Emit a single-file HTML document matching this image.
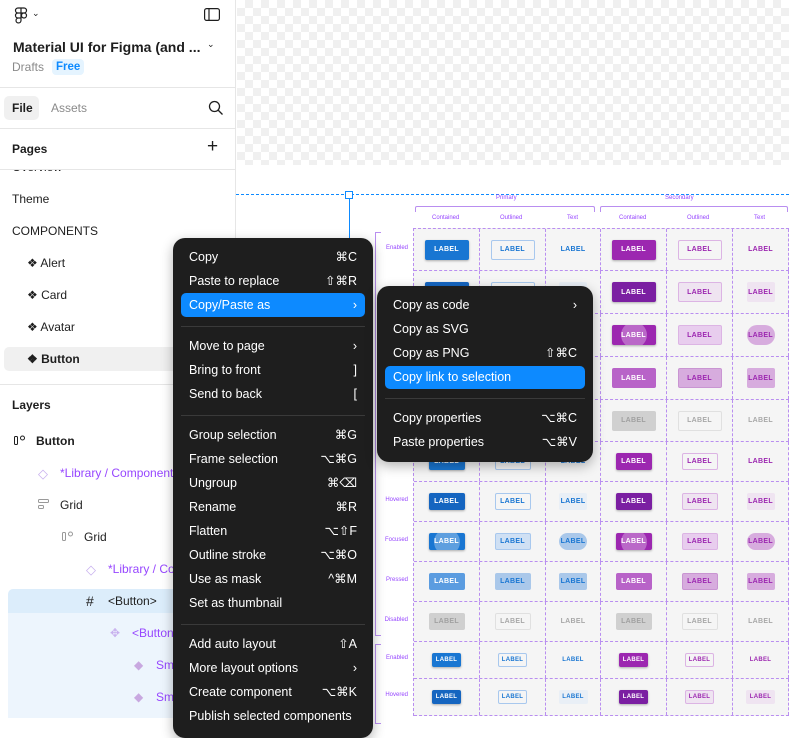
<!DOCTYPE html>
<html><head><meta charset="utf-8"><style>
*{box-sizing:border-box;margin:0;padding:0}
body{width:789px;height:718px;overflow:hidden;position:relative;background:#fff;font-family:"Liberation Sans",sans-serif;font-size:12px;color:#1e1e1e}
.a{position:absolute;white-space:nowrap}
.checker{position:absolute;left:237px;top:0;width:552px;height:165px;background-color:#fff;background-image:linear-gradient(45deg,#f0f0f0 25%,transparent 25%,transparent 75%,#f0f0f0 75%),linear-gradient(45deg,#f0f0f0 25%,transparent 25%,transparent 75%,#f0f0f0 75%);background-size:16px 16px;background-position:0 0,8px 8px}
.panel{position:absolute;left:0;top:0;width:236px;height:718px;background:#fff;border-right:1px solid #e6e6e6}
.hr{position:absolute;left:0;width:236px;height:1px;background:#e6e6e6}
.purple{color:#9747ff}
.grid{position:absolute;left:413px;top:228px;width:376px;background:#f5f5f5}
.row{display:flex;border-bottom:1px dashed #b98ef0}
.c{border-right:1px dashed #b98ef0;display:flex;align-items:center;justify-content:center;flex:none;position:relative}
.c:nth-child(1),.c:nth-child(2),.c:nth-child(4),.c:nth-child(5){width:66px}
.c:nth-child(3){width:55px}.c:nth-child(6){width:56px}
.b{font-size:7px;font-weight:bold;letter-spacing:.3px;display:flex;align-items:center;justify-content:center;border-radius:2px}
.L .b{width:44px;height:20px}.M .b{width:36px;height:17px}.S .b{width:29px;height:14px;font-size:6px}
.L .c:nth-child(3) .b,.L .c:nth-child(6) .b{width:28px}
.M .c:nth-child(3) .b,.M .c:nth-child(6) .b{width:28px}
.pc{background:#1976d2;color:#fff;box-shadow:0 1px 2px rgba(0,0,0,.3)}
.ph{background:#1565c0;color:#fff;box-shadow:0 1px 2px rgba(0,0,0,.3)}
.pp{background:#5b9ce0;color:#fff}
.po{border:1px solid #a8c8ee;color:#1976d2;background:#f5f5f5}
.pt{color:#1976d2}
.pth{color:#1976d2;background:#e9eff6}
.ptp{color:#1976d2;background:#aac8ea}
.sc{background:#9c27b0;color:#fff;box-shadow:0 1px 2px rgba(0,0,0,.3)}
.sh{background:#7b1fa2;color:#fff;box-shadow:0 1px 2px rgba(0,0,0,.3)}
.sp{background:#b863c8;color:#fff}
.so{border:1px solid #dcb4e4;color:#9c27b0;background:#f5f5f5}
.soh{border:1px solid #dcb4e4;color:#9c27b0;background:#efe4f1}
.sop{color:#9c27b0;background:#d7acde;border:1px solid #c995d2}
.st{color:#9c27b0}
.sth{color:#9c27b0;background:#efe4f1}
.stp{color:#9c27b0;background:#d7acde}
.dc{background:#d0d0d0;color:#a0a0a0}
.do{border:1px solid #e0e0e0;color:#a8a8a8}
.dt{color:#a8a8a8}
.fo{position:relative;overflow:hidden}
.fo::after{content:"";position:absolute;left:50%;top:50%;width:26px;height:26px;margin:-13px;border-radius:50%;background:rgba(255,255,255,.3)}
.rl{position:absolute;font-size:6px;color:#9747ff;width:40px;text-align:right;left:368px}
.menu{position:absolute;background:#1e1e1e;border-radius:12px;color:#fff;font-size:12.5px;box-shadow:0 4px 12px rgba(0,0,0,.3)}
.mi{position:absolute;left:16px;right:16px;height:24px;line-height:24px}
.mi .k{position:absolute;right:0;top:0}
.sep{position:absolute;left:8px;right:8px;height:1px;background:#3a3a3a}
.hl{position:absolute;background:#0d8aff;border-radius:5px}
</style></head><body>
<div class="checker"></div>
<div class="a" style="left:236px;top:194px;width:553px;height:0;border-top:1px dashed #0d8aff"></div>
<div class="a" style="left:349px;top:195px;width:1px;height:50px;background:#0d8aff"></div>
<div class="a" style="left:345px;top:191px;width:8px;height:8px;border:1px solid #0d8aff;background:#fff"></div>
<div class="a purple" style="left:496px;top:195px;font-size:6px">Primary</div>
<div class="a purple" style="left:665px;top:195px;font-size:6px">Secondary</div>
<div class="a" style="left:415px;top:206px;width:180px;height:6px;border:1px solid #b98ef0;border-bottom:none;border-radius:2px 2px 0 0"></div>
<div class="a" style="left:600px;top:206px;width:188px;height:6px;border:1px solid #b98ef0;border-bottom:none;border-radius:2px 2px 0 0"></div>
<div class="a purple" style="left:432px;top:215px;font-size:6px">Contained</div>
<div class="a purple" style="left:500px;top:215px;font-size:6px">Outlined</div>
<div class="a purple" style="left:567px;top:215px;font-size:6px">Text</div>
<div class="a purple" style="left:619px;top:215px;font-size:6px">Contained</div>
<div class="a purple" style="left:687px;top:215px;font-size:6px">Outlined</div>
<div class="a purple" style="left:754px;top:215px;font-size:6px">Text</div>
<div class="a" style="left:375px;top:232px;width:6px;height:404px;border:1px solid #b98ef0;border-right:none"></div>
<div class="a" style="left:375px;top:644px;width:6px;height:80px;border:1px solid #b98ef0;border-right:none"></div>
<div class="rl" style="top:245px">Enabled</div>
<div class="rl" style="top:497px">Hovered</div>
<div class="rl" style="top:537px">Focused</div>
<div class="rl" style="top:577px">Pressed</div>
<div class="rl" style="top:617px">Disabled</div>
<div class="rl" style="top:655px">Enabled</div>
<div class="rl" style="top:692px">Hovered</div>
<div class="grid" style="border-top:1px dashed #b98ef0;border-left:1px dashed #b98ef0">
<div class="row L" style="height:42px"><div class="c"><div class="b pc">LABEL</div></div><div class="c"><div class="b po">LABEL</div></div><div class="c"><div class="b pt">LABEL</div></div><div class="c"><div class="b sc">LABEL</div></div><div class="c"><div class="b so">LABEL</div></div><div class="c"><div class="b st">LABEL</div></div></div>
<div class="row L" style="height:43px"><div class="c"><div class="b ph">LABEL</div></div><div class="c"><div class="b po">LABEL</div></div><div class="c"><div class="b pth">LABEL</div></div><div class="c"><div class="b sh">LABEL</div></div><div class="c"><div class="b soh">LABEL</div></div><div class="c"><div class="b sth">LABEL</div></div></div>
<div class="row L" style="height:43px"><div class="c"><div class="b pc fo">LABEL</div></div><div class="c"><div class="b po">LABEL</div></div><div class="c"><div class="b ptp" style="border-radius:10px">LABEL</div></div><div class="c"><div class="b sc fo">LABEL</div></div><div class="c"><div class="b so" style="background:#e8cdee">LABEL</div></div><div class="c"><div class="b stp" style="border-radius:10px">LABEL</div></div></div>
<div class="row L" style="height:43px"><div class="c"><div class="b pp">LABEL</div></div><div class="c"><div class="b ptp">LABEL</div></div><div class="c"><div class="b ptp">LABEL</div></div><div class="c"><div class="b sp">LABEL</div></div><div class="c"><div class="b sop">LABEL</div></div><div class="c"><div class="b stp">LABEL</div></div></div>
<div class="row L" style="height:42px"><div class="c"><div class="b dc">LABEL</div></div><div class="c"><div class="b do">LABEL</div></div><div class="c"><div class="b dt">LABEL</div></div><div class="c"><div class="b dc">LABEL</div></div><div class="c"><div class="b do">LABEL</div></div><div class="c"><div class="b dt">LABEL</div></div></div>
<div class="row M" style="height:40px"><div class="c"><div class="b pc">LABEL</div></div><div class="c"><div class="b po">LABEL</div></div><div class="c"><div class="b pt">LABEL</div></div><div class="c"><div class="b sc">LABEL</div></div><div class="c"><div class="b so">LABEL</div></div><div class="c"><div class="b st">LABEL</div></div></div>
<div class="row M" style="height:40px"><div class="c"><div class="b ph">LABEL</div></div><div class="c"><div class="b po">LABEL</div></div><div class="c"><div class="b pth">LABEL</div></div><div class="c"><div class="b sh">LABEL</div></div><div class="c"><div class="b soh">LABEL</div></div><div class="c"><div class="b sth">LABEL</div></div></div>
<div class="row M" style="height:40px"><div class="c"><div class="b pc fo">LABEL</div></div><div class="c"><div class="b po" style="background:#cfe0f4">LABEL</div></div><div class="c"><div class="b ptp" style="border-radius:9px">LABEL</div></div><div class="c"><div class="b sc fo">LABEL</div></div><div class="c"><div class="b so" style="background:#e8cdee">LABEL</div></div><div class="c"><div class="b stp" style="border-radius:9px">LABEL</div></div></div>
<div class="row M" style="height:40px"><div class="c"><div class="b pp">LABEL</div></div><div class="c"><div class="b ptp">LABEL</div></div><div class="c"><div class="b ptp">LABEL</div></div><div class="c"><div class="b sp">LABEL</div></div><div class="c"><div class="b sop">LABEL</div></div><div class="c"><div class="b stp">LABEL</div></div></div>
<div class="row M" style="height:40px"><div class="c"><div class="b dc">LABEL</div></div><div class="c"><div class="b do">LABEL</div></div><div class="c"><div class="b dt">LABEL</div></div><div class="c"><div class="b dc">LABEL</div></div><div class="c"><div class="b do">LABEL</div></div><div class="c"><div class="b dt">LABEL</div></div></div>
<div class="row S" style="height:37px"><div class="c"><div class="b pc">LABEL</div></div><div class="c"><div class="b po">LABEL</div></div><div class="c"><div class="b pt">LABEL</div></div><div class="c"><div class="b sc">LABEL</div></div><div class="c"><div class="b so">LABEL</div></div><div class="c"><div class="b st">LABEL</div></div></div>
<div class="row S" style="height:37px"><div class="c"><div class="b ph">LABEL</div></div><div class="c"><div class="b po">LABEL</div></div><div class="c"><div class="b pth">LABEL</div></div><div class="c"><div class="b sh">LABEL</div></div><div class="c"><div class="b soh">LABEL</div></div><div class="c"><div class="b sth">LABEL</div></div></div>
</div>

<div class="panel">
<svg class="a" style="left:14px;top:7px" width="14" height="18" viewBox="0 0 14 18" fill="none" stroke="#1e1e1e" stroke-width="1.2"><path d="M7 1H4a2.5 2.5 0 0 0 0 5h3zM7 1h3a2.5 2.5 0 0 1 0 5H7zM7 6H4a2.5 2.5 0 0 0 0 5h3zM7 11H4a2.5 2.5 0 1 0 3 2.5zM10 6a2.5 2.5 0 1 1 0 5 2.5 2.5 0 0 1 0-5z"/></svg>
<div class="a" style="left:32px;top:8px;font-size:9px">⌄</div>
<svg class="a" style="left:204px;top:8px" width="16" height="13" viewBox="0 0 16 13" fill="none" stroke="#1e1e1e" stroke-width="1.2"><rect x="0.6" y="0.6" width="14.8" height="11.8" rx="2"/><path d="M5 1v11"/></svg>
<div class="a" style="left:13px;top:39px;font-size:14px;font-weight:bold">Material UI for Figma (and ...</div>
<div class="a" style="left:207px;top:39px;font-size:9px">⌄</div>
<div class="a" style="left:12px;top:60px;color:#8a8a8a">Drafts</div>
<div class="a" style="left:52px;top:59px;background:#e5f4ff;color:#0d8aff;padding:1px 4px;border-radius:4px;font-weight:bold;font-size:11.5px;line-height:14px">Free</div>
<div class="hr" style="top:87px"></div>
<div class="a" style="left:4px;top:96px;width:35px;height:24px;background:#f0f0f0;border-radius:5px"></div>
<div class="a" style="left:12px;top:101px;font-weight:bold">File</div>
<div class="a" style="left:51px;top:101px;color:#8a8a8a">Assets</div>
<svg class="a" style="left:208px;top:100px" width="16" height="16" viewBox="0 0 16 16" fill="none" stroke="#1e1e1e" stroke-width="1.3"><circle cx="6.5" cy="6.5" r="5"/><path d="M10 10l4.5 4.5"/></svg>
<div class="hr" style="top:128px"></div>
<div class="a" style="left:12px;top:142px;font-weight:bold">Pages</div>
<div class="a" style="left:207px;top:136px;font-size:19px;font-weight:300">+</div>
<div class="a" style="left:12px;top:170px;height:4px;overflow:hidden;width:100px"><div style="margin-top:-10px">Overview</div></div>
<div class="hr" style="top:169px"></div>
<div class="a" style="left:12px;top:192px">Theme</div>
<div class="a" style="left:12px;top:224px">COMPONENTS</div>
<div class="a" style="left:27px;top:256px">❖ Alert</div>
<div class="a" style="left:27px;top:288px">❖ Card</div>
<div class="a" style="left:27px;top:320px">❖ Avatar</div>
<div class="a" style="left:4px;top:347px;width:232px;height:24px;background:#f0f0f0;border-radius:5px"></div>
<div class="a" style="left:27px;top:352px;font-weight:bold">❖ Button</div>
<div class="hr" style="top:384px"></div>
<div class="a" style="left:12px;top:398px;font-weight:bold">Layers</div>
<svg class="a" style="left:14px;top:435px" width="12" height="10" viewBox="0 0 12 10" fill="none" stroke="#1e1e1e" stroke-width="1"><rect x="0.5" y="1.5" width="3" height="8" rx="1"/><circle cx="8.5" cy="3" r="2"/></svg>
<div class="a" style="left:36px;top:434px;font-weight:bold">Button</div>
<div class="a" style="left:38px;top:466px;color:#c8b0ee;font-size:13px">◇</div>
<div class="a purple" style="left:60px;top:466px">*Library / Component</div>
<svg class="a" style="left:38px;top:499px" width="11" height="10" viewBox="0 0 11 10" fill="none" stroke="#999" stroke-width="1"><rect x="0.5" y="0.5" width="10" height="3" rx="1"/><rect x="0.5" y="6.5" width="5" height="3" rx="1"/></svg>
<div class="a" style="left:60px;top:498px">Grid</div>
<svg class="a" style="left:62px;top:531px" width="12" height="10" viewBox="0 0 12 10" fill="none" stroke="#999" stroke-width="1"><rect x="0.5" y="1.5" width="3" height="8" rx="1"/><circle cx="8.5" cy="3" r="2"/></svg>
<div class="a" style="left:84px;top:530px">Grid</div>
<div class="a" style="left:86px;top:562px;color:#c8b0ee;font-size:13px">◇</div>
<div class="a purple" style="left:108px;top:562px">*Library / Co</div>
<div class="a" style="left:8px;top:589px;width:228px;height:24px;background:#dcedfb;border-radius:5px 5px 0 0"></div>
<div class="a" style="left:8px;top:613px;width:228px;height:105px;background:#edf5fd"></div>
<div class="a" style="left:86px;top:593px;font-size:14px">#</div>
<div class="a" style="left:108px;top:594px">&lt;Button&gt;</div>
<div class="a" style="left:110px;top:626px;color:#c8b0ee">✥</div>
<div class="a purple" style="left:132px;top:626px">&lt;Button</div>
<div class="a" style="left:134px;top:658px;color:#c8a8e0">◆</div>
<div class="a purple" style="left:156px;top:658px">Sm</div>
<div class="a" style="left:134px;top:690px;color:#c8a8e0">◆</div>
<div class="a purple" style="left:156px;top:690px">Sm</div>
</div>

<div class="menu" style="left:173px;top:238px;width:200px;height:500px">
<div class="hl" style="left:8px;top:55px;width:184px;height:24px"></div>
<div class="mi" style="top:7px">Copy<span class="k">⌘C</span></div>
<div class="mi" style="top:31px">Paste to replace<span class="k">⇧⌘R</span></div>
<div class="mi" style="top:55px">Copy/Paste as<span class="k">›</span></div>
<div class="sep" style="top:88px"></div>
<div class="mi" style="top:96px">Move to page<span class="k">›</span></div>
<div class="mi" style="top:120px">Bring to front<span class="k">]</span></div>
<div class="mi" style="top:144px">Send to back<span class="k">[</span></div>
<div class="sep" style="top:177px"></div>
<div class="mi" style="top:185px">Group selection<span class="k">⌘G</span></div>
<div class="mi" style="top:209px">Frame selection<span class="k">⌥⌘G</span></div>
<div class="mi" style="top:233px">Ungroup<span class="k">⌘⌫</span></div>
<div class="mi" style="top:257px">Rename<span class="k">⌘R</span></div>
<div class="mi" style="top:281px">Flatten<span class="k">⌥⇧F</span></div>
<div class="mi" style="top:305px">Outline stroke<span class="k">⌥⌘O</span></div>
<div class="mi" style="top:329px">Use as mask<span class="k">^⌘M</span></div>
<div class="mi" style="top:353px">Set as thumbnail</div>
<div class="sep" style="top:386px"></div>
<div class="mi" style="top:394px">Add auto layout<span class="k">⇧A</span></div>
<div class="mi" style="top:418px">More layout options<span class="k">›</span></div>
<div class="mi" style="top:442px">Create component<span class="k">⌥⌘K</span></div>
<div class="mi" style="top:466px">Publish selected components</div>
</div>

<div class="menu" style="left:377px;top:286px;width:216px;height:176px">
<div class="hl" style="left:8px;top:80px;width:200px;height:23px"></div>
<div class="mi" style="top:7px">Copy as code<span class="k">›</span></div>
<div class="mi" style="top:31px">Copy as SVG</div>
<div class="mi" style="top:55px">Copy as PNG<span class="k">⇧⌘C</span></div>
<div class="mi" style="top:79px">Copy link to selection</div>
<div class="sep" style="top:112px"></div>
<div class="mi" style="top:120px">Copy properties<span class="k">⌥⌘C</span></div>
<div class="mi" style="top:144px">Paste properties<span class="k">⌥⌘V</span></div>
</div>
</body></html>
